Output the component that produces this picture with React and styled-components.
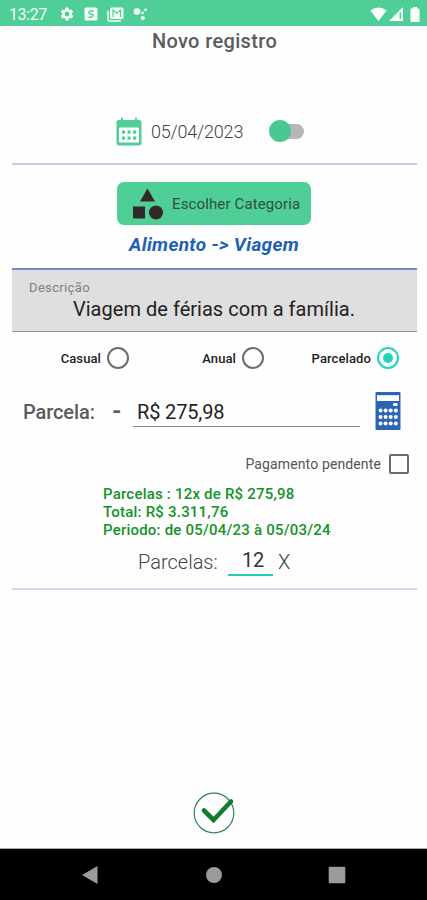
import React, {useState} from "react";
import styled, {createGlobalStyle} from "styled-components";

function StatusBar() {
    return (
        <StatusWrapper>
            <Clock>13:27</Clock>
            <Notifications>
                <svg width="16" height="16" viewBox="0 0 24 24">
                    <path
                        fill="#f4fff9"
                        d="M19.14 12.94c.04-.3.06-.61.06-.94s-.02-.64-.07-.94l2.03-1.58a.5.5 0 0 0 .12-.61l-1.92-3.32a.49.49 0 0 0-.59-.22l-2.39.96a7 7 0 0 0-1.62-.94l-.36-2.54a.48.48 0 0 0-.48-.41h-3.84a.47.47 0 0 0-.47.41l-.36 2.54c-.59.24-1.13.57-1.62.94l-2.39-.96a.48.48 0 0 0-.59.22L2.74 8.87a.47.47 0 0 0 .12.61l2.03 1.58a6 6 0 0 0-.02 1.88l-2.03 1.58a.5.5 0 0 0-.12.61l1.92 3.32c.12.22.37.29.59.22l2.39-.96c.5.38 1.03.7 1.62.94l.36 2.54c.05.24.24.41.48.41h3.84c.24 0 .44-.17.47-.41l.36-2.54a6.6 6.6 0 0 0 1.62-.94l2.39.96c.22.08.47 0 .59-.22l1.92-3.32a.47.47 0 0 0-.12-.61zM12 15.6a3.6 3.6 0 1 1 0-7.2 3.6 3.6 0 0 1 0 7.2z"
                    />
                </svg>
                <svg width="14" height="14" viewBox="0 0 14 14">
                    <rect x="0.5" y="0.5" width="13" height="13" rx="1.5" fill="#f4fff9" />
                    <path
                        d="M10 4H6.5Q5.1 4 5 5.4T6.2 7H7.8Q9.2 7 9 8.5T7.6 10.2H4.3"
                        fill="none"
                        stroke="#4fce98"
                        strokeWidth="1.5"
                    />
                </svg>
                <svg width="17" height="15" viewBox="0 0 17 15">
                    <path d="M1 3.5V12.5Q1 14 2.5 14H14" fill="none" stroke="#f4fff9" strokeWidth="1.4" />
                    <rect x="3" y="0.5" width="13.5" height="11.5" rx="1.5" fill="#f4fff9" />
                    <path d="M6 10V3L9.7 6.5L13.5 3V10" fill="none" stroke="#4fce98" strokeWidth="1.2" />
                </svg>
                <svg width="15" height="14" viewBox="0 0 15 14">
                    <circle cx="4" cy="4.5" r="3.3" fill="#f4fff9" />
                    <circle cx="9.5" cy="6" r="1.4" fill="#f4fff9" />
                    <circle cx="12.5" cy="2.8" r="1.4" fill="#f4fff9" />
                    <circle cx="9.8" cy="11" r="2.1" fill="#f4fff9" />
                </svg>
            </Notifications>
            <Signals>
                <svg width="17" height="14" viewBox="0 0 17 14">
                    <path d="M0.3 3.4Q8.5 -2.6 16.7 3.4L8.5 14z" fill="#fff" />
                </svg>
                <svg width="14" height="14" viewBox="0 0 14 14">
                    <path d="M14 0V14H0z" fill="#fff" />
                    <path d="M11.3 5V12" stroke="#4fce98" strokeWidth="1.6" />
                </svg>
                <svg width="10" height="15" viewBox="0 0 10 15">
                    <path d="M3 0H7V1.5H8.5Q9.5 1.5 9.5 2.5V14Q9.5 15 8.5 15H1.5Q.5 15 .5 14V2.5Q.5 1.5 1.5 1.5H3z" fill="#fff" />
                </svg>
            </Signals>
        </StatusWrapper>
    );
}

function CalendarIcon() {
    return (
        <svg width="26" height="29" viewBox="0 0 26 29">
            <path
                d="M3 3H5V1.5Q5 0.5 6 0.5T7 1.5V3H19V1.5Q19 .5 20 .5T21 1.5V3H23Q25.5 3 25.5 5.5V26Q25.5 28.5 23 28.5H3Q.5 28.5 .5 26V5.5Q.5 3 3 3z"
                fill="#4fce98"
            />
            <rect x="3" y="10.5" width="20" height="15" rx="1" fill="#fff" />
            {[6, 11.5, 17].map((x) => (
                <g key={x} fill="#4fce98">
                    <rect x={x} y="13.5" width="3.2" height="3.2" />
                    <rect x={x} y="19.5" width="3.2" height="3.2" />
                </g>
            ))}
        </svg>
    );
}

function CalculatorIcon() {
    return (
        <svg width="26" height="38" viewBox="0 0 26 38">
            <rect x="0.5" width="25" height="38" rx="1" fill="#2c65b3" />
            <rect x="2" y="3.2" width="22" height="5.8" fill="#fff" />
            <rect x="18" y="11" width="4.6" height="3" rx="1.3" fill="#fff" />
            {[18.5, 25, 31.5].map((y) =>
                [5.5, 10.6, 15.7, 20.8].map((x) => (
                    <circle key={`${x}-${y}`} cx={x} cy={y} r="2" fill="#fff" />
                ))
            )}
        </svg>
    );
}

const periods = ["Casual", "Anual", "Parcelado"];

function App() {
    const [period, setPeriod] = useState("Parcelado");
    const [pending, setPending] = useState(false);

    return (
        <>
            <GlobalStyle />
            <Screen>
                <StatusBar />
                <Title>Novo registro</Title>
                <DateRow>
                    <CalendarIcon />
                    <DateText>05/04/2023</DateText>
                    <Toggle />
                </DateRow>
                <Divider $color="#c5cee8" />
                <CategoryButton>
                    <svg width="32" height="32" viewBox="0 0 32 32" fill="#30292a">
                        <path d="M15.5 0.5L23 13.5H8z" />
                        <rect x="1" y="18.5" width="12" height="12" />
                        <circle cx="24" cy="24.5" r="7" />
                    </svg>
                    <span>Escolher Categoria</span>
                </CategoryButton>
                <CategoryPath>Alimento -&gt; Viagem</CategoryPath>
                <Description>
                    <small>Descrição</small>
                    <p>Viagem de férias com a família.</p>
                </Description>
                <Periods>
                    {periods.map((name) => (
                        <Option key={name} onClick={() => setPeriod(name)}>
                            <span>{name}</span>
                            <Radio $checked={period === name} />
                        </Option>
                    ))}
                </Periods>
                <AmountRow>
                    <AmountLabel>Parcela:</AmountLabel>
                    <Sign>-</Sign>
                    <Amount>R$ 275,98</Amount>
                    <CalculatorIcon />
                </AmountRow>
                <Pending onClick={() => setPending(!pending)}>
                    <span>Pagamento pendente</span>
                    <Checkbox $checked={pending} />
                </Pending>
                <Summary>
                    <Line>Parcelas : 12x de R$ 275,98</Line>
                    <Line>Total: R$ 3.311,76</Line>
                    <Line>Periodo: de 05/04/23 à 05/03/24</Line>
                </Summary>
                <Installments>
                    <InstallmentsLabel>Parcelas:</InstallmentsLabel>
                    <Count>12</Count>
                    <span>X</span>
                </Installments>
                <Divider $color="#d3d8ec" />
                <Confirm>
                    <svg width="42" height="42" viewBox="0 0 42 42" fill="none">
                        <circle cx="21" cy="21" r="19.8" stroke="#3b8058" strokeWidth="1.2" />
                        <path d="M11 18.5L20.5 28L38 9.5" stroke="#107c2e" strokeWidth="4.6" strokeLinecap="round" />
                    </svg>
                </Confirm>
                <NavBar>
                    <svg width="18" height="20" viewBox="0 0 18 20">
                        <path d="M16.5 1V19L1 10z" fill="#9b9b9b" />
                    </svg>
                    <svg width="18" height="18" viewBox="0 0 18 18">
                        <circle cx="9" cy="9" r="8" fill="#9b9b9b" />
                    </svg>
                    <svg width="18" height="18" viewBox="0 0 18 18">
                        <rect x="0.7" y="0.7" width="16.6" height="16.6" rx="1" fill="#9b9b9b" />
                    </svg>
                </NavBar>
            </Screen>
        </>
    );
}

export default App;

const GlobalStyle = createGlobalStyle`
    * {
        box-sizing: border-box;
    }
    body {
        margin: 0;
        background: #fff;
        font-family: Roboto, sans-serif;
    }
    svg {
        display: block;
        flex-shrink: 0;
    }
`;

const Screen = styled.div`
    width: 427px;
    height: 900px;
    display: flex;
    flex-direction: column;
    overflow: hidden;
    white-space: nowrap;
    background: #fefefe;
`;

const StatusWrapper = styled.div`
    height: 26px;
    display: flex;
    align-items: center;
    padding: 2px 7px 0 9px;
    background: #4fce98;
    color: #f4fff9;
`;

const Clock = styled.span`
    width: 50px;
    font-size: 16px;
    letter-spacing: -0.4px;
`;

const Notifications = styled.div`
    display: flex;
    align-items: center;
    gap: 9px;
`;

const Signals = styled.div`
    display: flex;
    align-items: center;
    gap: 2px;
    margin-left: auto;
    svg:last-child {
        margin-left: 5px;
    }
`;

const Title = styled.h1`
    margin: 0;
    height: 30px;
    padding-left: 2px;
    line-height: 31px;
    text-align: center;
    font-size: 20px;
    font-weight: 500;
    letter-spacing: 0.35px;
    color: #5c5c5c;
`;

const DateRow = styled.div`
    height: 50px;
    margin-top: 50px;
    padding-left: 116px;
    display: flex;
    align-items: center;
`;

const DateText = styled.span`
    width: 119px;
    padding-left: 9px;
    font-size: 18px;
    font-weight: 300;
    letter-spacing: -0.2px;
    color: #444;
`;

const Toggle = styled.div`
    width: 36px;
    height: 22px;
    margin-left: 8px;
    display: flex;
    align-items: center;
    &:before {
        content: "";
        width: 22px;
        height: 22px;
        border-radius: 50%;
        background: #48c993;
        z-index: 1;
    }
    &:after {
        content: "";
        width: 25px;
        height: 15px;
        margin-left: -12px;
        border-radius: 0 8px 8px 0;
        background: #b8b6b6;
    }
`;

const Divider = styled.div`
    height: 2px;
    flex-shrink: 0;
    margin: 7px 10px 0 12px;
    background: ${(props) => props.$color};
`;

const CategoryButton = styled.button`
    width: 194px;
    height: 43px;
    margin: 17px 0 0 117px;
    padding: 0 0 0 15px;
    display: flex;
    align-items: center;
    gap: 8px;
    border: none;
    border-radius: 7px;
    background: #4fce98;
    color: #2d5142;
    font-family: inherit;
    font-size: 15px;
    letter-spacing: 0.13px;
`;

const CategoryPath = styled.div`
    height: 43px;
    padding-left: 1px;
    line-height: 39px;
    text-align: center;
    font-size: 19px;
    font-weight: 700;
    font-style: italic;
    letter-spacing: 0.33px;
    color: #2060b4;
`;

const Description = styled.div`
    height: 64px;
    margin: 0 10px 0 12px;
    padding: 10px 0 0 17px;
    border-top: 2px solid #738bc4;
    border-bottom: 1px solid #989898;
    background: #dfdfdf;
    small {
        display: block;
        height: 15px;
        line-height: 15px;
        font-size: 13px;
        letter-spacing: 0.35px;
        color: #808080;
    }
    p {
        margin: 0 18px 0 0;
        line-height: 28px;
        text-align: center;
        font-size: 20px;
        letter-spacing: 0.03px;
        color: #222;
    }
`;

const Periods = styled.div`
    height: 52px;
    display: grid;
    grid-template-columns: 129px 135px 135px;
    align-items: center;
`;

const Option = styled.div`
    display: flex;
    align-items: center;
    justify-content: flex-end;
    gap: 6px;
    font-size: 13px;
    font-weight: 500;
    letter-spacing: 0.1px;
    color: #222;
`;

const Radio = styled.div`
    width: 22px;
    height: 22px;
    border: 2px solid ${(props) => (props.$checked ? "#1fd5bd" : "#6c6c6c")};
    border-radius: 50%;
    padding: 4px;
    background: ${(props) => (props.$checked ? "#1fd5bd" : "transparent")};
    background-clip: content-box;
`;

const AmountRow = styled.div`
    height: 54px;
    padding-left: 23px;
    display: flex;
    align-items: center;
    color: #5c5c5c;
`;

const AmountLabel = styled.span`
    width: 89px;
    padding-top: 1px;
    font-size: 20px;
    font-weight: 500;
    letter-spacing: -0.1px;
`;

const Sign = styled.span`
    width: 21px;
    font-size: 24px;
    font-weight: 700;
`;

const Amount = styled.div`
    width: 227px;
    height: 31px;
    margin-right: 15px;
    padding-left: 4px;
    line-height: 32px;
    border-bottom: 1px solid #8c8c8c;
    font-size: 20px;
    letter-spacing: -0.15px;
    color: #222;
`;

const Pending = styled.div`
    height: 51px;
    padding-right: 18px;
    display: flex;
    align-items: center;
    justify-content: flex-end;
    gap: 8px;
    font-size: 14px;
    letter-spacing: 0.13px;
    color: #555;
`;

const Checkbox = styled.div`
    width: 20px;
    height: 20px;
    border: 2px solid #6c6c6c;
    border-radius: 2px;
    background: ${(props) => (props.$checked ? "#6c6c6c" : "transparent")};
`;

const Summary = styled.div`
    margin-top: -4px;
    padding-left: 103px;
`;

const Line = styled.div`
    height: 18px;
    line-height: 18px;
    font-size: 15px;
    font-weight: 500;
    letter-spacing: 0.21px;
    color: #159329;
`;

const Installments = styled.div`
    height: 42px;
    padding: 4px 0 0 138px;
    display: flex;
    align-items: center;
    font-size: 20px;
    font-weight: 300;
    color: #444;
`;

const InstallmentsLabel = styled.span`
    width: 90px;
`;

const Count = styled.div`
    width: 45px;
    height: 28px;
    margin-right: 5px;
    padding-left: 5px;
    line-height: 24px;
    text-align: center;
    font-weight: 400;
    letter-spacing: -0.3px;
    border-bottom: 2px solid #25cdb9;
    color: #333;
`;

const Confirm = styled.div`
    margin-top: auto;
    padding-bottom: 14px;
    display: flex;
    justify-content: center;
`;

const NavBar = styled.div`
    height: 52px;
    flex-shrink: 0;
    padding: 0 81px;
    display: flex;
    align-items: center;
    justify-content: space-between;
    border-top: 1px solid #aaa;
    background: #000;
`;
